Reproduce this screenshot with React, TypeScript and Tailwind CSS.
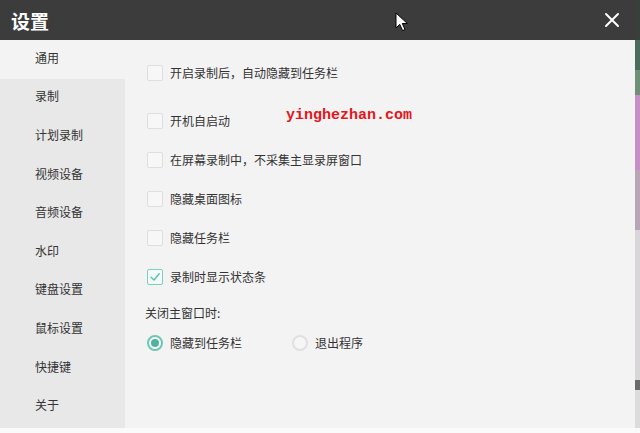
import React from "react";

const font = { fontFamily: '"Noto Sans CJK SC", "Noto Sans", sans-serif' };

const sideItems = ["通用", "录制", "计划录制", "视频设备", "音频设备", "水印", "键盘设置", "鼠标设置", "快捷键", "关于"];

function Check({ checked }: { checked?: boolean }) {
  return (
    <div
      className={
        "w-[16px] h-[16px] rounded-[2px] border flex items-center justify-center " +
        (checked ? "border-[#7fcfbf] bg-[#f2fbf9]" : "border-[#dedede] bg-[#f7f7f7]")
      }
    >
      {checked && (
        <svg width="12" height="12" viewBox="0 0 12 12" fill="none">
          <path d="M2 6.2 L5 9 L10.2 2.8" stroke="#5dbfab" strokeWidth="1.4" strokeLinecap="round" strokeLinejoin="round" />
        </svg>
      )}
    </div>
  );
}

function Radio({ checked }: { checked?: boolean }) {
  return (
    <div
      className={
        "w-[16px] h-[16px] rounded-full border-2 flex items-center justify-center " +
        (checked ? "border-[#6cc7b3] bg-white" : "border-[#e0e0e0] bg-[#f6f6f6]")
      }
    >
      {checked && <div className="w-[8px] h-[8px] rounded-full bg-[#4fb39d]" />}
    </div>
  );
}

function Row({ label, checked, className = "" }: { label: string; checked?: boolean; className?: string }) {
  return (
    <div className={"h-[39px] flex items-center gap-[7px] " + className}>
      <Check checked={checked} />
      <span className="text-[12px] text-[#333] leading-none">{label}</span>
    </div>
  );
}

export default function App() {
  return (
    <div className="relative w-[640px] h-[433px] bg-[#fafafa] overflow-hidden" style={font}>
      <div className="flex h-[428px]">
        <div className="w-[635px] h-full flex flex-col">
          <div className="h-[40px] bg-[#3c3c3c] flex items-center justify-between pl-[11px] pr-[15px] shrink-0">
            <span className="text-[19px] font-bold text-white leading-none">设置</span>
            <svg width="16" height="16" viewBox="0 0 16 16" fill="none">
              <path d="M2 2 L14 14 M14 2 L2 14" stroke="white" strokeWidth="2" strokeLinecap="round" />
            </svg>
          </div>
          <div className="flex flex-1">
            <div className="w-[125px] bg-[#e8e8e8] flex flex-col">
              {sideItems.map((s, i) => (
                <div
                  key={s}
                  className={
                    "h-[38.6px] flex items-center pl-[35px] pb-[3px] text-[12px] text-[#333] leading-none " +
                    (i === 0 ? "bg-[#f3f3f3]" : "")
                  }
                >
                  {s}
                </div>
              ))}
            </div>
            <div className="flex-1 bg-[#f3f3f3] flex flex-col pt-[13px] pl-[22px]">
              <Row label="开启录制后，自动隐藏到任务栏" className="mb-[9px]" />
              <Row label="开机自启动" />
              <Row label="在屏幕录制中，不采集主显录屏窗口" />
              <Row label="隐藏桌面图标" />
              <Row label="隐藏任务栏" />
              <Row label="录制时显示状态条" checked />
              <div className="h-[34px] flex items-center -ml-[2px]">
                <span className="text-[12px] text-[#333] leading-none">关闭主窗口时:</span>
              </div>
              <div className="h-[26px] flex items-center">
                <div className="flex items-center gap-[7px] w-[145px]">
                  <Radio checked />
                  <span className="text-[12px] text-[#333] leading-none">隐藏到任务栏</span>
                </div>
                <div className="flex items-center gap-[7px]">
                  <Radio />
                  <span className="text-[12px] text-[#333] leading-none">退出程序</span>
                </div>
              </div>
            </div>
          </div>
        </div>
        <div className="w-[5px] h-full flex flex-col">
          <div className="h-[40px] bg-[#39403c]" />
          <div className="h-[30px] bg-[#4c6b5c]" />
          <div className="h-[25px] bg-[#6f8f78]" />
          <div className="h-[75px] bg-[#c78fc6]" />
          <div className="h-[60px] bg-[#b8a6b6]" />
          <div className="h-[150px] bg-[#d8d6d8]" />
          <div className="h-[10px] bg-[#6a6a6a]" />
          <div className="flex-1 bg-[#dcdcdc]" />
        </div>
      </div>
      <div
        className="absolute left-[286px] top-[108px] text-[15px] font-bold text-[#e3161c] leading-none"
        style={{ fontFamily: '"Liberation Mono", "DejaVu Sans Mono", monospace' }}
      >
        yinghezhan.com
      </div>
      <svg className="absolute left-[395px] top-[12px]" width="14" height="20" viewBox="0 0 14 20">
        <path d="M1 1 L1 16 L4.8 12.4 L7.6 18.6 L10 17.5 L7.3 11.5 L12.4 11.5 Z" fill="white" stroke="black" strokeWidth="1" strokeLinejoin="round" />
      </svg>
    </div>
  );
}
